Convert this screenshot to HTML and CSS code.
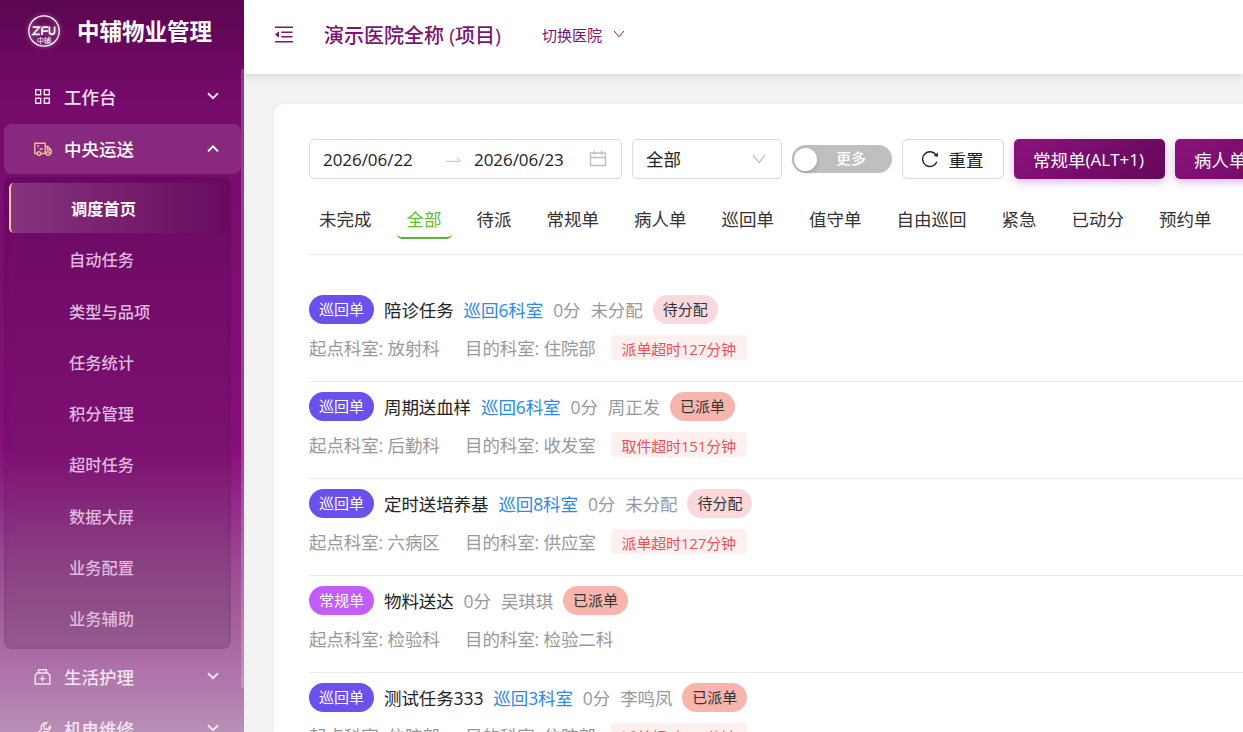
FILE: index.html
```
<!DOCTYPE html>
<html lang="zh-CN">
<head>
    <meta charset="UTF-8">
    <meta name="viewport" content="width=device-width, initial-scale=1.0">
    <title>中辅物业管理</title>
    <link rel="stylesheet" href="styles.css">
</head>
<body>

    <div class="layout">
        <aside class="sidebar">
            <div class="brand">
                <svg class="brand-logo" viewBox="0 0 36 36">
                    <circle cx="18" cy="18" r="15.2" fill="none" stroke="#fff" stroke-width="1.3"/>
                    <path d="M6.6 14.2H13.4L7 21.3H13.8M16 22V16.4Q16 14.2 18 14.2H22.2M16 18.2H21.8M23.4 13.4V19Q23.4 21.3 25.8 21.3T28.6 19V13.4" fill="none" stroke="#fff" stroke-width="1.7"/>
                    <text x="18" y="29.8" text-anchor="middle">中辅</text>
                </svg>
                <span class="brand-name">中辅物业管理</span>
            </div>

            <nav class="menu">
                <div class="menu-item">
                    <svg class="menu-icon" viewBox="0 0 18 18"><path d="M1.7 1.7h5v5h-5zM10.3 1.7h5v5h-5zM1.7 10.3h5v5h-5zM10.3 10.3h5v5h-5z"/></svg>
                    <span>工作台</span>
                    <svg class="arrow" viewBox="0 0 12 8"><path d="M1 1.2l5 5 5-5"/></svg>
                </div>
                <div class="menu-item open">
                    <svg class="menu-icon" viewBox="0 0 18 18"><path d="M3.2 13.5H.8V3.2h10.4v10.3H7M11.2 6.5h2.6l3.3 3.2v3.8h-1.4M11.2 13.5h1M3.2 6h2M5.6 9h3.2M13.4 6.5v3.2h3.7"/><circle cx="5.1" cy="13.6" r="1.8"/><circle cx="14" cy="13.6" r="1.8"/></svg>
                    <span>中央运送</span>
                    <svg class="arrow" viewBox="0 0 12 8"><path d="M1 6.4l5-5 5 5"/></svg>
                </div>
                <div class="submenu">
                    <div class="sub-item active">调度首页</div>
                    <div class="sub-item">自动任务</div>
                    <div class="sub-item">类型与品项</div>
                    <div class="sub-item">任务统计</div>
                    <div class="sub-item">积分管理</div>
                    <div class="sub-item">超时任务</div>
                    <div class="sub-item">数据大屏</div>
                    <div class="sub-item">业务配置</div>
                    <div class="sub-item">业务辅助</div>
                </div>
                <div class="menu-item">
                    <svg class="menu-icon" viewBox="0 0 18 18"><path d="M1.2 16V7.2l2-2.2h10.6l2 2.2V16zM4.6 5V1.7h7.8V5M8.5 7.6v6M5.5 10.6h6"/></svg>
                    <span>生活护理</span>
                    <svg class="arrow" viewBox="0 0 12 8"><path d="M1 1.2l5 5 5-5"/></svg>
                </div>
                <div class="menu-item">
                    <svg class="menu-icon" viewBox="0 0 18 18"><path d="M12.8 2.7a4.8 4.8 0 0 0-5.2 6.5L1.5 15.3l2.3 2.3 6.1-6.1a4.8 4.8 0 0 0 6.4-5.3l-3 3-3.1-.4-.4-3z"/></svg>
                    <span>机电维修</span>
                    <svg class="arrow" viewBox="0 0 12 8"><path d="M1 1.2l5 5 5-5"/></svg>
                </div>
            </nav>
            <div class="scroll-thumb"></div>
        </aside>

        <div class="main">
            <header class="header">
                <svg class="fold" viewBox="0 0 18 18"><path d="M0 1.2h18M6.3 6.2H17.5M6.3 10.8H17.5M0 15.8h18" fill="none" stroke="currentColor" stroke-width="1.6"/><path d="M0 8.5l4-3.2v6.4z" fill="currentColor" stroke="none"/></svg>
                <h1>演示医院全称 (项目)</h1>
                <div class="switch-hospital">
                    切换医院
                    <svg viewBox="0 0 12 8"><path d="M1 1l5 5.8L11 1"/></svg>
                </div>
            </header>

            <section class="card">
                <div class="toolbar">
                    <div class="range">
                        <span class="date">2026/06/22</span>
                        <svg class="range-arrow" viewBox="0 0 16 8"><path d="M0 6.3h14.5L10.7 2"/></svg>
                        <span class="date">2026/06/23</span>
                        <svg class="calendar" viewBox="0 0 18 18"><path d="M1.5 3h15v12.5h-15zM1.5 7.5h15M5.3 .8v4M12.7 .8v4"/></svg>
                    </div>
                    <div class="select">
                        全部
                        <svg viewBox="0 0 14 10"><path d="M1 1l6 7.5L13 1"/></svg>
                    </div>
                    <div class="toggle"><i class="knob"></i><span>更多</span></div>
                    <button class="btn">
                        <svg viewBox="0 0 18 18"><path d="M15.9 11.8A7.4 7.4 0 1 1 15.2 5.1"/><path d="M16.9 2.5v4.2l-4.1-.8z" fill="currentColor" stroke="none"/></svg>
                        重置
                    </button>
                    <button class="btn primary">常规单<span class="key">(ALT+1)</span></button>
                    <button class="btn primary">病人单<span class="key">(ALT+2)</span></button>
                </div>

                <div class="tabs">
                    <span class="tab">未完成</span>
                    <span class="tab active">全部</span>
                    <span class="tab">待派</span>
                    <span class="tab">常规单</span>
                    <span class="tab">病人单</span>
                    <span class="tab">巡回单</span>
                    <span class="tab">值守单</span>
                    <span class="tab">自由巡回</span>
                    <span class="tab">紧急</span>
                    <span class="tab">已动分</span>
                    <span class="tab">预约单</span>
                </div>

                <div class="orders">
                    <div class="order">
                        <div class="line">
                            <span class="type">巡回单</span>
                            <span class="name">陪诊任务</span>
                            <span class="dept">巡回6科室</span>
                            <span>0分</span>
                            <span>未分配</span>
                            <span class="status waiting">待分配</span>
                        </div>
                        <div class="line places">
                            <span class="from">起点科室: 放射科</span>
                            <span>目的科室: 住院部</span>
                            <span class="late">派单超时127分钟</span>
                        </div>
                    </div>
                    <div class="order">
                        <div class="line">
                            <span class="type">巡回单</span>
                            <span class="name">周期送血样</span>
                            <span class="dept">巡回6科室</span>
                            <span>0分</span>
                            <span>周正发</span>
                            <span class="status">已派单</span>
                        </div>
                        <div class="line places">
                            <span class="from">起点科室: 后勤科</span>
                            <span>目的科室: 收发室</span>
                            <span class="late">取件超时151分钟</span>
                        </div>
                    </div>
                    <div class="order">
                        <div class="line">
                            <span class="type">巡回单</span>
                            <span class="name">定时送培养基</span>
                            <span class="dept">巡回8科室</span>
                            <span>0分</span>
                            <span>未分配</span>
                            <span class="status waiting">待分配</span>
                        </div>
                        <div class="line places">
                            <span class="from">起点科室: 六病区</span>
                            <span>目的科室: 供应室</span>
                            <span class="late">派单超时127分钟</span>
                        </div>
                    </div>
                    <div class="order">
                        <div class="line">
                            <span class="type normal">常规单</span>
                            <span class="name">物料送达</span>
                            <span>0分</span>
                            <span>吴琪琪</span>
                            <span class="status">已派单</span>
                        </div>
                        <div class="line places">
                            <span class="from">起点科室: 检验科</span>
                            <span>目的科室: 检验二科</span>
                        </div>
                    </div>
                    <div class="order">
                        <div class="line">
                            <span class="type">巡回单</span>
                            <span class="name">测试任务333</span>
                            <span class="dept">巡回3科室</span>
                            <span>0分</span>
                            <span>李鸣凤</span>
                            <span class="status">已派单</span>
                        </div>
                        <div class="line places">
                            <span class="from">起点科室: 住院部</span>
                            <span>目的科室: 住院部</span>
                            <span class="late">派单超时127分钟</span>
                        </div>
                    </div>
                </div>
            </section>
        </div>
    </div>

</body>
</html>
```
FILE: styles.css
```
* {
    box-sizing: border-box;
}

body {
    margin: 0;
    height: 100vh;
    overflow: hidden;
    background-color: #f3f3f3;
    color: #222;
    font-family: "Open Sans", "Noto Sans CJK SC", sans-serif;
    font-size: 17.5px;
    white-space: nowrap;
}

svg {
    flex: none;
    fill: none;
    stroke: currentColor;
}

.layout {
    display: flex;
    height: 732px;
}

/* Sidebar */
.sidebar {
    position: relative;
    flex: none;
    width: 244px;
    overflow: hidden;
    background: linear-gradient(180deg, #5c0650 0, #750b6a 100px, #7f0e75 320px, #870f7c 450px, #9c4794 560px, #aa69a4 650px, #b98fb6 732px);
    color: #f5e2f3;
}

.brand {
    display: flex;
    align-items: center;
    height: 71px;
    padding: 0 0 9px 26px;
}

.brand-logo {
    width: 36px;
    height: 36px;
    margin-right: 15px;
    filter: drop-shadow(0 0 2px rgba(255, 200, 255, 0.6));
}

.brand-logo text {
    fill: #fff;
    stroke: none;
    font-size: 7px;
}

.brand-name {
    padding-bottom: 1px;
    color: #fff;
    font-size: 22.5px;
    font-weight: 700;
}

.menu-item {
    display: flex;
    align-items: center;
    height: 50px;
    margin: 1px 3px 2px 4px;
    padding: 0 22px 0 30px;
    border-radius: 8px;
    font-weight: 500;
}

.menu-item span {
    padding-bottom: 2px;
}

.menu-icon {
    width: 18px;
    height: 18px;
    margin-right: 12px;
    stroke-width: 1.4;
}

.menu-item .arrow {
    width: 12px;
    height: 8px;
    margin: 0 0 3px auto;
    stroke-width: 2;
}

.menu-item.open {
    background-color: rgba(255, 255, 255, 0.12);
    color: #fff;
}

.menu-item.open .menu-icon {
    color: #efc08f;
}

.menu-item.open .arrow {
    margin-bottom: 0;
}

.submenu {
    width: 227px;
    height: 472px;
    margin: 3px 0 3px 4px;
    padding: 6px 5px;
    border-radius: 8px;
    background: linear-gradient(180deg, rgba(75, 0, 70, 0.26), rgba(85, 20, 75, 0.22) 60%, rgba(80, 50, 75, 0.25));
    box-shadow: inset 0 0 5px rgba(50, 0, 45, 0.12);
}

.sub-item {
    height: 50px;
    margin-bottom: 1.3px;
    padding-left: 60px;
    color: #dfbadd;
    font-size: 16.25px;
    font-weight: 500;
    line-height: 53px;
}

.sub-item.active {
    border-left: 2px solid #f7c8a0;
    border-radius: 5px;
    background: linear-gradient(90deg, #86347d, #690b5f);
    color: #fff;
    font-weight: 700;
}

.scroll-thumb {
    position: absolute;
    top: 69px;
    right: 0;
    width: 3px;
    height: 619px;
    background-color: rgba(255, 255, 255, 0.2);
}

/* Header */
.main {
    display: flex;
    flex: 1;
    flex-direction: column;
    min-width: 0;
}

.header {
    display: flex;
    flex: none;
    align-items: center;
    height: 74px;
    padding: 0 0 5px 31px;
    background-color: #fff;
    box-shadow: 0 3px 9px rgba(0, 0, 0, 0.1);
    color: #7b1572;
}

.fold {
    width: 18px;
    height: 18px;
}

.header h1 {
    margin: 0 41px 0 31px;
    padding-bottom: 1px;
    font-size: 20px;
    font-weight: 500;
}

.switch-hospital {
    display: flex;
    align-items: center;
    gap: 11px;
    font-size: 15px;
}

.switch-hospital svg {
    width: 12px;
    height: 8px;
    margin-bottom: 1px;
}

/* Card */
.card {
    flex: 1;
    margin: 30px 0 0 30px;
    padding: 35px 0 0 35px;
    overflow: hidden;
    border-radius: 10px 0 0 0;
    background-color: #fff;
    box-shadow: 0 0 4px rgba(0, 0, 0, 0.04);
}

.toolbar {
    display: flex;
    align-items: center;
    gap: 10px;
    height: 40px;
}

.range,
.select,
.btn {
    display: flex;
    flex: none;
    align-items: center;
    height: 40px;
    border: 1px solid #d9d9d9;
    border-radius: 5px;
    background-color: #fff;
}

.range {
    width: 313px;
    padding: 0 14px 0 13px;
}

.date {
    width: 123px;
    font-size: 17px;
    letter-spacing: -0.05px;
}

.range-arrow {
    width: 16px;
    height: 8px;
    margin-right: 12px;
    color: #bfbfbf;
}

/* the first date leaves room for the arrow, the second for the calendar */
.range-arrow + .date {
    width: 115px;
}

.calendar {
    width: 18px;
    height: 18px;
    color: #bfbfbf;
    stroke-width: 1.4;
}

.select {
    justify-content: space-between;
    width: 150px;
    padding: 0 15px 1px 13px;
}

.select svg {
    width: 14px;
    height: 10px;
    color: #bfbfbf;
    stroke-width: 1.3;
}

.toggle {
    display: flex;
    flex: none;
    align-items: center;
    width: 100px;
    height: 28px;
    padding-left: 2px;
    border-radius: 14px;
    background-color: #bfbfbf;
    color: #fff;
    font-size: 15px;
    font-weight: 500;
}

.toggle span {
    padding-bottom: 3px;
}

.knob {
    width: 23px;
    height: 23px;
    margin-right: 19px;
    border-radius: 50%;
    background-color: #fff;
    box-shadow: 0 2px 4px rgba(0, 35, 11, 0.2);
}

.btn {
    justify-content: center;
    gap: 10px;
    width: 102px;
    padding: 0 2px 0 0;
    color: #222;
    font: inherit;
}

.btn svg {
    width: 18px;
    height: 18px;
    stroke-width: 1.4;
}

.btn.primary {
    gap: 0;
    width: 151px;
    border: none;
    background: linear-gradient(135deg, #8a137e, #660759);
    box-shadow: 0 3px 9px rgba(138, 19, 126, 0.3);
    color: #fff;
}

.key {
    font-size: 17px;
}

/* Tabs */
.tabs {
    display: flex;
    height: 76px;
    padding-top: 20px;
    border-bottom: 1px solid #ececec;
    color: #333;
}

.tab {
    flex: none;
    height: 40px;
    margin-right: 15px;
    padding: 0 10px;
    line-height: 40px;
}

.tab.active {
    border-bottom: 2px solid #5fb336;
    border-radius: 5px;
    color: #5fc02f;
}

/* Orders */
.orders {
    padding-top: 30px;
}

.order {
    height: 97px;
    padding-top: 10px;
    border-bottom: 1px solid #ececec;
    color: #999;
}

.line {
    display: flex;
    align-items: center;
    gap: 10px;
    height: 29px;
    letter-spacing: -0.1px;
}

.type,
.status {
    width: 65px;
    height: 29px;
    border-radius: 15px;
    background-color: #6b50ec;
    color: #fff;
    font-size: 15px;
    letter-spacing: 0;
    line-height: 28px;
    text-align: center;
}

.type.normal {
    background-color: #c65cf8;
}

.status {
    background-color: #f8b5ae;
    color: #333;
}

.status.waiting {
    background-color: #f9d9dc;
}

.name {
    color: #222;
}

.dept {
    color: #2b8be6;
}

.line.places {
    gap: 0;
    height: 25px;
    margin-top: 11px;
}

.from {
    width: 156px;
}

.late {
    width: 136px;
    height: 25px;
    margin-left: 15px;
    border-radius: 4px;
    background-color: #fff0f0;
    color: #ec5059;
    font-size: 15px;
    letter-spacing: -0.15px;
    line-height: 28px;
    text-align: center;
}
```
